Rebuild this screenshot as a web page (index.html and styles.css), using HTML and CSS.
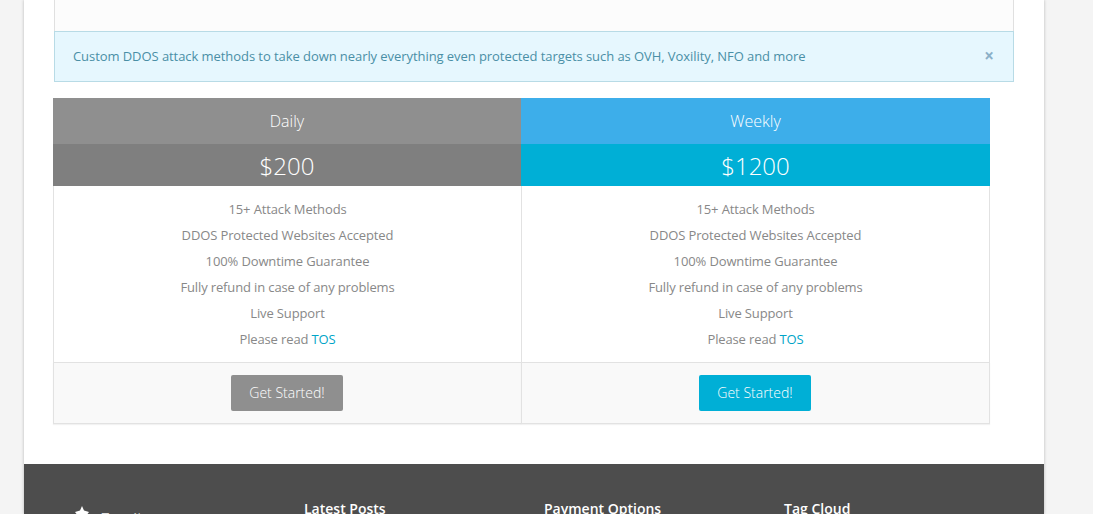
FILE: index.html
```html
<!DOCTYPE html>
<html lang="en">
<head>
<meta charset="utf-8">
<title>Pricing</title>
<link rel="stylesheet" href="styles.css">
</head>
<body>
<div class="page">
  <main class="content">
    <div class="panel"></div>
    <div class="alert">
      <span>Custom DDOS attack methods to take down nearly everything even protected targets such as OVH, Voxility, NFO and more</span>
      <span class="close">×</span>
    </div>
    <div class="plans">
      <section class="plan plan-grey">
        <h3 class="plan-name">Daily</h3>
        <div class="plan-price">$200</div>
        <ul class="plan-list">
          <li>15+ Attack Methods</li>
          <li>DDOS Protected Websites Accepted</li>
          <li>100% Downtime Guarantee</li>
          <li>Fully refund in case of any problems</li>
          <li>Live Support</li>
          <li>Please read <a href="#">TOS</a></li>
        </ul>
        <div class="plan-foot"><a class="btn" href="#">Get Started!</a></div>
      </section>
      <section class="plan plan-blue">
        <h3 class="plan-name">Weekly</h3>
        <div class="plan-price">$1200</div>
        <ul class="plan-list">
          <li>15+ Attack Methods</li>
          <li>DDOS Protected Websites Accepted</li>
          <li>100% Downtime Guarantee</li>
          <li>Fully refund in case of any problems</li>
          <li>Live Support</li>
          <li>Please read <a href="#">TOS</a></li>
        </ul>
        <div class="plan-foot"><a class="btn" href="#">Get Started!</a></div>
      </section>
    </div>
  </main>
  <footer class="footer">
    <div class="foot-col foot-logo">
      <svg class="star" width="16" height="16" viewBox="0 0 16 16"><path fill="#fff" d="M8 0l2 4.500 5 1.500-3 4 1 6-5-2-5 2 1-6-3-4 5-1.500z"/></svg>
      <span class="logo-text">Zeroit</span>
    </div>
    <h4 class="foot-col foot-title">Latest Posts</h4>
    <h4 class="foot-col foot-title">Payment Options</h4>
    <h4 class="foot-col foot-title">Tag Cloud</h4>
  </footer>
</div>
</body>
</html>
```
FILE: styles.css
```css
html, body {
  margin: 0;
  height: 514px;
  overflow: hidden;
}
body {
  background: #f4f4f4;
  font-family: "Open Sans", sans-serif;
  font-size: 13px;
  color: #888;
}
.page {
  width: 1020px;
  height: 514px;
  margin-left: 24px;
  background: #fff;
  box-shadow: 0 0 3px rgba(0, 0, 0, .25);
  overflow: hidden;
}
.content {
  padding: 0 30px 40px 30px;
}
.panel {
  height: 31px;
  background: #fcfcfc;
  border: 1px solid #e0e0e0;
  border-width: 0 1px;
}
.alert {
  display: flex;
  justify-content: space-between;
  align-items: center;
  box-sizing: content-box;
  height: 47px;
  padding: 0 18px 2px;
  background: #e6f7fe;
  border: 1px solid #b8dbe6;
  color: #4a8fa6;
  line-height: 20px;
  letter-spacing: -0.067px;
}
.close {
  color: #8bb0c8;
  font-size: 17px;
  font-weight: 700;
  margin-right: 1px;
}
.plans {
  display: grid;
  grid-template-columns: 468px 469px;
  width: 937px;
  margin: 16px 0 0 -1px;
}
.plan {
  text-align: center;
}
.plan-name {
  margin: 0;
  height: 46px;
  font-size: 16px;
  font-weight: 300;
  line-height: 46px;
  color: #fff;
}
.plan-price {
  height: 42px;
  font-size: 24px;
  font-weight: 300;
  line-height: 44px;
  color: #fff;
}
.plan-grey .plan-name { background: #8f8f8f; }
.plan-grey .plan-price { background: #7f7f7f; }
.plan-blue .plan-name { background: #3daeea; }
.plan-blue .plan-price { background: #00afd6; }
.plan-list {
  list-style: none;
  margin: 0;
  padding: 10px 0;
  line-height: 26px;
  letter-spacing: -0.13px;
  background: #fff;
  border-left: 1px solid #e2e2e2;
}
.plan-blue .plan-list,
.plan-blue .plan-foot {
  border-right: 1px solid #e2e2e2;
}
.plan-list a {
  color: #00a5c8;
  text-decoration: none;
}
.plan-foot {
  height: 60px;
  display: flex;
  align-items: center;
  justify-content: center;
  padding-right: 1px;
  background: #f9f9f9;
  border-top: 1px solid #e2e2e2;
  border-bottom: 1px solid #e2e2e2;
  border-left: 1px solid #e2e2e2;
  box-shadow: 0 1px 1px rgba(0, 0, 0, .05);
}
.btn {
  display: block;
  box-sizing: border-box;
  width: 112px;
  height: 36px;
  line-height: 36px;
  border-radius: 2px;
  color: #fff;
  font-size: 14px;
  font-weight: 300;
  text-align: center;
  text-decoration: none;
}
.plan-grey .btn { background: #8f8f8f; }
.plan-blue .btn { background: #00afd6; }
.footer {
  display: grid;
  grid-template-columns: 280px 240px 240px 240px;
  height: 80px;
  padding-top: 35px;
  background: #4d4d4d;
  color: #fff;
}
.foot-col {
  margin: 0;
}
.foot-logo {
  display: flex;
  align-items: flex-start;
  gap: 11px;
  padding-left: 50px;
  padding-top: 7px;
  font-size: 15px;
  color: #ddd;
}
.logo-text {
  margin-top: 1px;
}
.foot-title {
  font-size: 14px;
  font-weight: 600;
  line-height: 20px;
  color: #fff;
}
```
